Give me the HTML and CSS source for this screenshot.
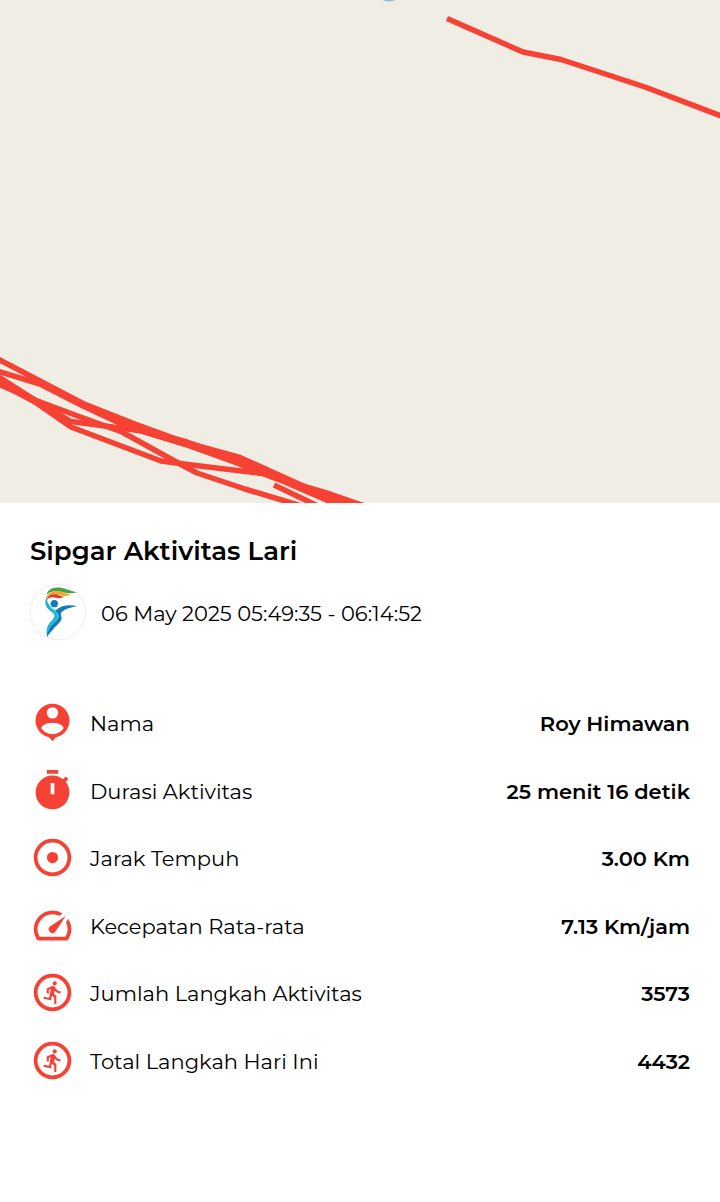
FILE: index.html
```html
<!DOCTYPE html>
<html lang="id">
<head>
    <meta charset="UTF-8">
    <meta name="viewport" content="width=device-width, initial-scale=1.0">
    <title>Sipgar Aktivitas Lari</title>
    <link rel="stylesheet" href="styles.css">
</head>
<body>
    <svg class="map" viewBox="0 0 720 503" role="img" aria-label="Rute lari">
        <circle class="marker" cx="389" cy="-13" r="14.5"/>
        <g class="route">
            <path d="M447 18.500L523 52L561 59.500L645 87L724 117"/>
            <path d="M-6 357L40 381L83 403.500L135 424L187 443L240 457.500L290 480L334 500L345 508"/>
            <path d="M-6 370L40 384L83 406L128 427L185 444L235 462L272 477L330 494L370 508"/>
            <path d="M-6 374L35 400L71 421.500L105 426L142 431L190 446L240 464L285 482L345 508"/>
            <path d="M-6 380L35 402L71 427L161 461L200 466L266 474L300 487L345 506"/>
            <path d="M-6 382L35 400L75 415L122 432L180 464L197 473L245 489L305 507"/>
            <path d="M83 404L130 427L187 442L235 459L290 483L322 495L365 506"/>
            <path d="M274 485L320 507"/>
        </g>
    </svg>

    <main>
        <h1>Sipgar Aktivitas Lari</h1>
        <div class="date">
            <svg class="logo" viewBox="12 12 168 168" aria-hidden="true">
                <circle cx="96" cy="96" r="83" fill="#fff" stroke="#e4e4e4" stroke-width="2"/>
                <path fill="#43a548" d="M62 42C68 25 88 20 108 24C125 27 138 35 153 37C138 42 124 40 108 36C88 32 73 34 62 44Z"/>
                <path fill="#f2a72e" d="M61 50C69 35 88 31 105 35C117 38 126 43 137 43C126 50 112 49 101 46C84 42 71 45 62 54Z"/>
                <path fill="#e53b35" d="M62 58C67 45 79 41 94 44C103 47 109 50 115 49C108 56 97 55 88 53C76 50 68 53 62 61Z"/>
                <path fill="#11b5d5" d="M61 50C54 70 60 84 76 95C86 102 90 107 80 119C65 134 59 144 63 167C67 146 80 136 93 125C106 112 103 101 91 93C73 81 63 72 61 50Z"/>
                <circle cx="85" cy="71" r="11" fill="#117cb9"/>
                <path fill="#117cb9" d="M88 92C105 75 127 73 153 78C133 83 119 86 108 95C101 102 107 109 107 115C105 129 86 140 80 150C75 156 68 162 63 172C62 150 73 138 86 127C100 114 105 106 88 92Z"/>
                <path d="M70 80C80 91 100 101 95 113C89 126 71 133 65 155" fill="none" stroke="#fff" stroke-width="1"/>
            </svg>
            <time datetime="2025-05-06T05:49:35">06 May 2025 05:49:35 - 06:14:52</time>
        </div>

        <dl>
            <div class="row">
                <dt>
                    <svg class="icon" viewBox="0 0 24 24" aria-hidden="true">
                        <path fill-rule="evenodd" d="M12 2a9 9 0 0 0-3 17.500c.9.300 1.600.700 2.100 1.400L12 22l.900-1.100c.500-.700 1.200-1.100 2.100-1.400A9 9 0 0 0 12 2zM12 3.800a3.050 3.050 0 1 1 0 6.100 3.050 3.050 0 0 1 0-6.100zM12 12.100c3.300 0 5.900 1.500 5.900 3-1.300 1.900-3.400 3.100-5.900 3.100s-4.600-1.200-5.900-3.100c0-1.500 2.600-3 5.900-3z"/>
                    </svg>
                    <span>Nama</span>
                </dt>
                <dd>Roy Himawan</dd>
            </div>
            <div class="row">
                <dt>
                    <svg class="icon" viewBox="0 0 24 24" aria-hidden="true">
                        <path d="M15 1H9v2h6V1zm-4 13h2V8h-2v6zm8.030-6.610l1.420-1.420c-.430-.510-.900-.990-1.410-1.410l-1.420 1.420C16.070 4.740 14.120 4 12 4c-4.970 0-9 4.030-9 9s4.020 9 9 9 9-4.030 9-9c0-2.120-.740-4.070-1.970-5.610z" fill-rule="evenodd"/>
                    </svg>
                    <span>Durasi Aktivitas</span>
                </dt>
                <dd>25 menit 16 detik</dd>
            </div>
            <div class="row">
                <dt>
                    <svg class="icon" viewBox="0 0 24 24" aria-hidden="true">
                        <circle class="ring" cx="12" cy="12" r="9"/>
                        <circle cx="12" cy="12" r="3"/>
                    </svg>
                    <span>Jarak Tempuh</span>
                </dt>
                <dd>3.00 Km</dd>
            </div>
            <div class="row">
                <dt>
                    <svg class="icon" viewBox="0 0 24 24" aria-hidden="true">
                        <path d="M20.380 8.570l-1.230 1.850a8 8 0 0 1-.220 7.580H5.070A8 8 0 0 1 15.580 6.850l1.850-1.230A10 10 0 0 0 3.350 19a2 2 0 0 0 1.720 1h13.850a2 2 0 0 0 1.740-1 10 10 0 0 0-.270-10.440z"/>
                        <path d="M10.590 15.410a2 2 0 0 0 2.830 0l5.660-8.490-8.490 5.660a2 2 0 0 0 0 2.830z"/>
                    </svg>
                    <span>Kecepatan Rata-rata</span>
                </dt>
                <dd>7.13 Km/jam</dd>
            </div>
            <div class="row">
                <dt>
                    <svg class="icon" viewBox="0 0 24 24" aria-hidden="true">
                        <circle class="ring" cx="12" cy="12" r="9"/>
                        <path id="runner" transform="translate(5.5 5.1) scale(.57)" d="M13.490 5.480c1.100 0 2-.9 2-2s-.9-2-2-2-2 .9-2 2 .9 2 2 2zm-3.600 13.900l1-4.400 2.100 2v6h2v-7.500l-2.100-2 .6-3c1.300 1.500 3.300 2.500 5.500 2.500v-2c-1.900 0-3.500-1-4.300-2.400l-1-1.600c-.4-.6-1-1-1.700-1-.3 0-.5.1-.8.1l-5.200 2.200v4.700h2v-3.400l1.800-.7-1.600 8.100-4.900-1-.4 2 7 1.400z"/>
                    </svg>
                    <span>Jumlah Langkah Aktivitas</span>
                </dt>
                <dd>3573</dd>
            </div>
            <div class="row">
                <dt>
                    <svg class="icon" viewBox="0 0 24 24" aria-hidden="true">
                        <circle class="ring" cx="12" cy="12" r="9"/>
                        <use href="#runner"/>
                    </svg>
                    <span>Total Langkah Hari Ini</span>
                </dt>
                <dd>4432</dd>
            </div>
        </dl>
    </main>
</body>
</html>
```

FILE: styles.css
```css
* {
    margin: 0;
    padding: 0;
    box-sizing: border-box;
}
body {
    background: #fff;
    color: #000;
    font-family: Montserrat, Inter, sans-serif;
    font-size: 21px;
    line-height: 28px;
}

.map {
    display: block;
    width: 100%;
    height: auto;
    background: #f0ede4;
}
.marker {
    fill: #8db9e2;
}
.route path {
    fill: none;
    stroke: #f64234;
    stroke-width: 5.5;
    stroke-linejoin: round;
}

main {
    padding: 32px 30px;
}
h1 {
    font-size: 26px;
    line-height: 32px;
    font-weight: 600;
}

.date {
    display: flex;
    align-items: center;
    gap: 15px;
    margin-top: 17px;
}
.logo {
    width: 56px;
    height: 56px;
}

dl {
    display: grid;
    grid-auto-rows: 1fr;
    min-height: 405px;
    margin-top: 49px;
}
.row {
    display: flex;
    align-items: center;
    justify-content: space-between;
}
dt {
    display: flex;
    align-items: center;
    gap: 15px;
}
dd {
    font-weight: 600;
    text-align: right;
}
time,
dt span,
dd {
    padding-top: 3px;
}
.icon {
    display: block;
    width: 45px;
    height: 45px;
    fill: #f64234;
}
.ring {
    fill: none;
    stroke: #f64234;
    stroke-width: 2;
}
```
